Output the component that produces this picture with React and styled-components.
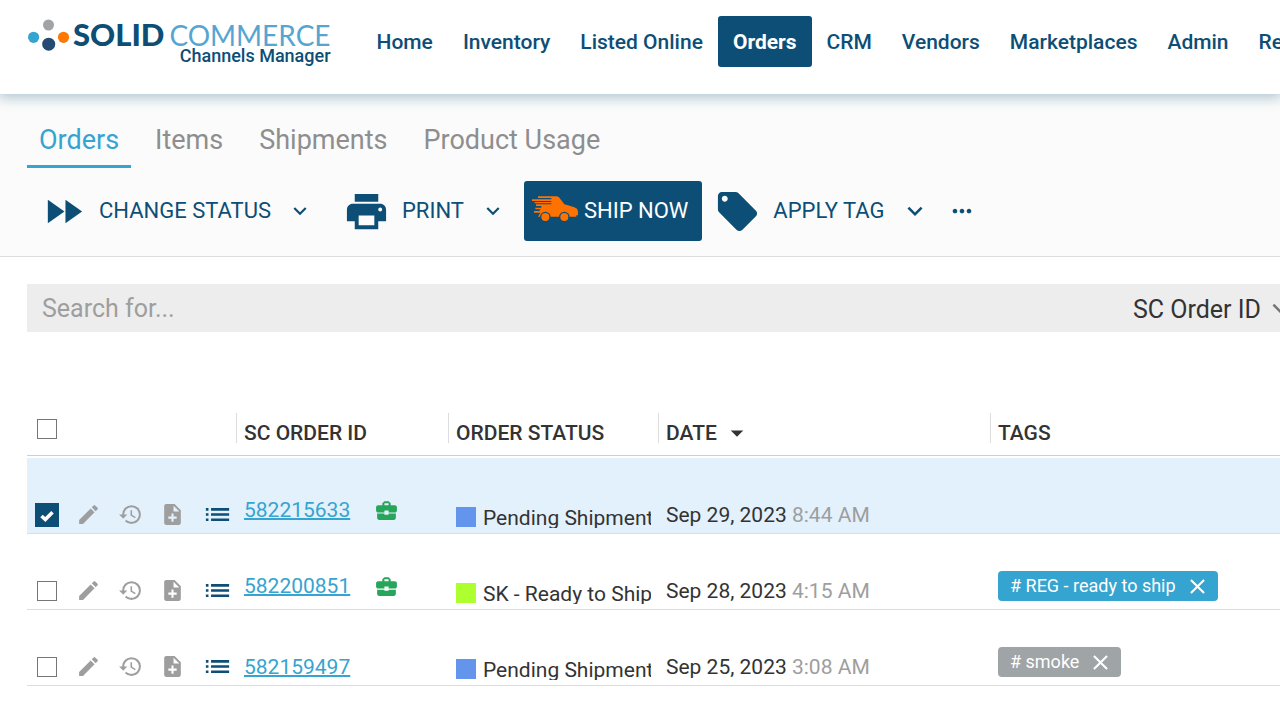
import { useState } from "react";
import styled, { createGlobalStyle } from "styled-components";
import {
    MdArrowDropDown,
    MdBusinessCenter,
    MdClose,
    MdEdit,
    MdExpandMore,
    MdFastForward,
    MdHistory,
    MdList,
    MdLocalOffer,
    MdMoreHoriz,
    MdNoteAdd,
    MdPrint,
} from "react-icons/md";

const navy = "#0d4e76";
const blue = "#35a4d1";
const grey = "#9e9e9e";
const dark = "#333333";

const GlobalStyle = createGlobalStyle`
    * {
        box-sizing: border-box;
    }

    body {
        margin: 0;
        background: #ffffff;
        color: ${dark};
        font-family: Roboto, "Liberation Sans", sans-serif;
        font-size: 21px;
        line-height: 24px;
        overflow-x: hidden;
    }

    button, input, select {
        margin: 0;
        font: inherit;
        color: inherit;
    }

    button {
        padding: 0;
        border: none;
        background: none;
        cursor: pointer;
    }

    svg {
        display: block;
        flex-shrink: 0;
    }
`;

const Page = styled.div`
    overflow: hidden;
`;

const Header = styled.header`
    position: relative;
    display: flex;
    align-items: flex-start;
    gap: 31px;
    height: 94px;
    padding: 16px 0 0 27px;
    background: #ffffff;
    box-shadow: 0 2px 12px 2px rgba(13, 78, 118, 0.3);
`;

const Logo = styled.a`
    display: flex;
    flex-shrink: 0;
    gap: 3px;
    color: ${navy};
    text-decoration: none;
`;

const LogoText = styled.div`
    display: flex;
    flex-direction: column;
    align-items: flex-end;
    padding-top: 3px;
`;

const LogoName = styled.div`
    display: flex;
    align-items: baseline;
    gap: 5px;
    font-family: Lato, sans-serif;
    font-size: 31px;
    font-weight: 900;
    line-height: 30px;
`;

const LogoLight = styled.span`
    color: #56a5d1;
    font-size: 28px;
    font-weight: 400;
`;

const LogoSub = styled.div`
    font-size: 18px;
    font-weight: 500;
    line-height: 12px;
`;

const Nav = styled.nav`
    display: flex;
`;

const NavLink = styled.a`
    padding: 2px 15px 0;
    border-radius: 3px;
    background: ${(props) => (props.$active ? navy : "transparent")};
    color: ${(props) => (props.$active ? "#ffffff" : navy)};
    font-weight: ${(props) => (props.$active ? 700 : 500)};
    line-height: 49px;
    text-decoration: none;
    white-space: nowrap;
`;

const SubHeader = styled.section`
    padding: 21px 27px 15px;
    border-bottom: 1px solid #dddddd;
    background: #fbfbfb;
`;

const Tabs = styled.nav`
    display: flex;
    gap: 12px;
`;

const Tab = styled.a`
    padding: 0 12px;
    border-bottom: 3px solid ${(props) => (props.$active ? blue : "transparent")};
    color: ${(props) => (props.$active ? blue : "#8e8e8e")};
    font-size: 27px;
    line-height: 50px;
    text-decoration: none;
`;

const Toolbar = styled.div`
    display: flex;
    align-items: center;
    gap: 18px;
    height: 60px;
    margin-top: 13px;
    padding-left: 13px;
    color: ${navy};
    font-size: 22px;
`;

const ToolGroup = styled.div`
    display: flex;
    align-items: center;
    gap: 16px;
    padding-right: ${(props) => (props.$wide ? "12px" : "0")};
`;

const ToolButton = styled.button`
    display: flex;
    align-items: center;
    gap: 12px;
    white-space: nowrap;
`;

const ShipGroup = styled.div`
    display: flex;
    gap: 12px;
`;

const ShipButton = styled(ToolButton)`
    gap: 6px;
    height: 60px;
    padding: 0 14px 0 8px;
    border-radius: 3px;
    background: ${navy};
    color: #ffffff;
`;

const Content = styled.main`
    padding: 27px 0 0 27px;
`;

// the bar runs on past the right edge of the window
const SearchBar = styled.div`
    display: flex;
    align-items: center;
    height: 48px;
    margin-right: -24px;
    padding: 0 9px 0 15px;
    background: #ededed;
    font-size: 25px;
`;

const SearchInput = styled.input`
    flex: 1;
    min-width: 0;
    padding: 0;
    border: none;
    outline: none;
    background: none;

    &::placeholder {
        color: ${grey};
        opacity: 1;
    }
`;

const SearchSelect = styled.select`
    appearance: none;
    padding: 4px 4px 0 0;
    border: none;
    outline: none;
    background: none;
`;

const Table = styled.table`
    width: 100%;
    margin-top: 81px;
    border-collapse: separate;
    border-spacing: 0;
    table-layout: fixed;

    tbody::before {
        content: "";
        display: block;
        height: 2px;
    }
`;

const HeadCell = styled.th`
    width: ${(props) => props.$width || "auto"};
    height: 43px;
    padding: 0;
    border-bottom: 1px solid #cfcfcf;
    font-weight: 500;
    text-align: left;
    vertical-align: top;
`;

const HeadLabel = styled.div`
    display: flex;
    align-items: center;
    gap: 5px;
    height: 30px;
    padding: 10px 0 0 7px;
    border-left: 1px solid #dddddd;
`;

const HeadCheck = styled.div`
    padding: 4px 0 0 8px;
`;

const Row = styled.tr`
    background: ${(props) => (props.$selected ? "#e3f1fd" : "#ffffff")};
`;

const Cell = styled.td`
    height: 76px;
    padding: 0 0 ${(props) => props.$bottom || "6px"} 8px;
    border-bottom: 1px solid #dddddd;
    vertical-align: bottom;
`;

const Actions = styled.div`
    display: flex;
    align-items: center;
    gap: 17px;
    height: 25px;
`;

const IconButton = styled.button`
    display: flex;
    align-items: center;
    height: 25px;
    color: ${(props) => (props.$dark ? navy : grey)};
`;

const CheckWrap = styled.label`
    position: relative;
    display: grid;
    place-items: center;
    width: 24px;
    height: 24px;

    svg {
        position: absolute;
        top: 7px;
        left: 5px;
        pointer-events: none;
    }
`;

const CheckInput = styled.input`
    appearance: none;
    width: 20px;
    height: 20px;
    border: 1px solid #767676;
    background: #ffffff;

    &:checked {
        width: 24px;
        height: 24px;
        border-color: ${navy};
        background: ${navy};
    }
`;

const OrderId = styled.div`
    display: flex;
    align-items: center;
    gap: 24px;
    height: ${(props) => (props.$business ? "34px" : "24px")};
    color: #27a55a;
`;

const OrderLink = styled.a`
    color: ${blue};
    text-decoration-thickness: 2px;
`;

const Status = styled.div`
    display: flex;
    gap: 7px;
    height: 21px;
    margin-right: 7px;
    line-height: 23px;
    overflow: hidden;
    white-space: nowrap;
`;

const StatusColor = styled.span`
    flex-shrink: 0;
    width: 20px;
    height: 20px;
    background: ${(props) => props.$color};
`;

const Time = styled.span`
    color: ${grey};
`;

const Tag = styled.span`
    display: inline-flex;
    align-items: center;
    gap: 9px;
    height: 30px;
    padding: 0 8px 0 12px;
    border-radius: 4px;
    background: ${(props) => props.$color};
    color: #ffffff;
    font-size: 18px;
    vertical-align: bottom;
`;

const navLinks = [
    "Home",
    "Inventory",
    "Listed Online",
    "Orders",
    "CRM",
    "Vendors",
    "Marketplaces",
    "Admin",
    "Reports",
];

const tabs = ["Orders", "Items", "Shipments", "Product Usage"];

const orders = [
    {
        id: "582215633",
        business: true,
        status: "Pending Shipment",
        color: "#6495ed",
        date: "Sep 29, 2023",
        time: "8:44 AM",
    },
    {
        id: "582200851",
        business: true,
        status: "SK - Ready to Ship",
        color: "#adff2f",
        date: "Sep 28, 2023",
        time: "4:15 AM",
        tag: "# REG - ready to ship",
        tagColor: blue,
    },
    {
        id: "582159497",
        business: false,
        status: "Pending Shipment",
        color: "#6495ed",
        date: "Sep 25, 2023",
        time: "3:08 AM",
        tag: "# smoke",
        tagColor: "#9fa4a6",
    },
];

function LogoMark() {
    return (
        <svg width="43" height="36" viewBox="0 0 43 36">
            <circle cx="21.5" cy="9" r="5.5" fill="#9fa4a6" />
            <circle cx="6.6" cy="21.3" r="5.6" fill={blue} />
            <circle cx="21.7" cy="28.2" r="6.5" fill="#234b73" />
            <circle cx="36.5" cy="21.3" r="5.6" fill="#ff7800" />
        </svg>
    );
}

function VanIcon() {
    return (
        <svg width="46" height="30" viewBox="0 0 138 90" fill="#ff7200">
            <path d="M18 1H74C80 1 84 8 88 13L97 25C106 28 124 31 133 37C137 40 138 45 138 49V58H133V62H18L25 50H6V45H22L26 40H10V35H28V30H12V25H58V22H8V18H58V15H0V10H58V6H18Z" />
            <g stroke={navy} strokeWidth="4">
                <circle cx="40" cy="63" r="14" />
                <circle cx="97" cy="63" r="14" />
            </g>
        </svg>
    );
}

function Checkbox({ label, checked, onChange }) {
    return (
        <CheckWrap>
            <CheckInput
                type="checkbox"
                aria-label={label}
                checked={checked}
                onChange={onChange}
            />
            {checked && (
                <svg width="14" height="12" viewBox="0 0 14 12">
                    <path
                        d="M1.5 6L5.3 9.5L12.5 2.2"
                        fill="none"
                        stroke="#ffffff"
                        strokeWidth="3.6"
                    />
                </svg>
            )}
        </CheckWrap>
    );
}

export default function App() {
    const [selected, setSelected] = useState(["582215633"]);
    const [search, setSearch] = useState("");

    const allSelected = selected.length === orders.length;

    const toggle = (id) => {
        setSelected(
            selected.includes(id)
                ? selected.filter((item) => item !== id)
                : [...selected, id]
        );
    };

    const toggleAll = () => {
        setSelected(allSelected ? [] : orders.map((order) => order.id));
    };

    return (
        <Page>
            <GlobalStyle />
            <Header>
                <Logo href="#">
                    <LogoMark />
                    <LogoText>
                        <LogoName>
                            SOLID<LogoLight>COMMERCE</LogoLight>
                        </LogoName>
                        <LogoSub>Channels Manager</LogoSub>
                    </LogoText>
                </Logo>
                <Nav>
                    {navLinks.map((link) => (
                        <NavLink key={link} href="#" $active={link === "Orders"}>
                            {link}
                        </NavLink>
                    ))}
                </Nav>
            </Header>

            <SubHeader>
                <Tabs>
                    {tabs.map((tab) => (
                        <Tab key={tab} href="#" $active={tab === "Orders"}>
                            {tab}
                        </Tab>
                    ))}
                </Tabs>
                <Toolbar>
                    <ToolGroup $wide>
                        <ToolButton>
                            <MdFastForward size={47} />
                            CHANGE STATUS
                        </ToolButton>
                        <ToolButton aria-label="Change status options">
                            <MdExpandMore size={26} />
                        </ToolButton>
                    </ToolGroup>
                    <ToolGroup>
                        <ToolButton>
                            <MdPrint size={47} />
                            PRINT
                        </ToolButton>
                        <ToolButton aria-label="Print options">
                            <MdExpandMore size={26} />
                        </ToolButton>
                    </ToolGroup>
                    <ShipGroup>
                        <ShipButton>
                            <VanIcon />
                            SHIP NOW
                        </ShipButton>
                        <ToolGroup>
                            <ToolButton>
                                <MdLocalOffer size={47} />
                                APPLY TAG
                            </ToolButton>
                            <ToolButton aria-label="Tag options">
                                <MdExpandMore size={30} />
                            </ToolButton>
                        </ToolGroup>
                    </ShipGroup>
                    <ToolButton aria-label="More">
                        <MdMoreHoriz size={28} />
                    </ToolButton>
                </Toolbar>
            </SubHeader>

            <Content>
                <SearchBar>
                    <SearchInput
                        type="text"
                        aria-label="Search"
                        placeholder="Search for..."
                        value={search}
                        onChange={(e) => setSearch(e.target.value)}
                    />
                    <SearchSelect aria-label="Search by">
                        <option>SC Order ID</option>
                    </SearchSelect>
                    <MdExpandMore size={30} color="#757575" />
                </SearchBar>

                <Table>
                    <thead>
                        <tr>
                            <HeadCell $width="209px">
                                <HeadCheck>
                                    <Checkbox
                                        label="Select all orders"
                                        checked={allSelected}
                                        onChange={toggleAll}
                                    />
                                </HeadCheck>
                            </HeadCell>
                            <HeadCell $width="212px">
                                <HeadLabel>SC ORDER ID</HeadLabel>
                            </HeadCell>
                            <HeadCell $width="210px">
                                <HeadLabel>ORDER STATUS</HeadLabel>
                            </HeadCell>
                            <HeadCell $width="332px">
                                <HeadLabel>
                                    DATE
                                    <MdArrowDropDown size={30} />
                                </HeadLabel>
                            </HeadCell>
                            <HeadCell>
                                <HeadLabel>TAGS</HeadLabel>
                            </HeadCell>
                        </tr>
                    </thead>
                    <tbody>
                        {orders.map((order) => (
                            <Row
                                key={order.id}
                                $selected={selected.includes(order.id)}
                            >
                                <Cell>
                                    <Actions>
                                        <Checkbox
                                            label={"Select order " + order.id}
                                            checked={selected.includes(order.id)}
                                            onChange={() => toggle(order.id)}
                                        />
                                        <IconButton aria-label="Edit">
                                            <MdEdit size={25} />
                                        </IconButton>
                                        <IconButton aria-label="History">
                                            <MdHistory size={25} />
                                        </IconButton>
                                        <IconButton aria-label="Add note">
                                            <MdNoteAdd size={25} />
                                        </IconButton>
                                        <IconButton aria-label="Details" $dark>
                                            <MdList size={31} />
                                        </IconButton>
                                    </Actions>
                                </Cell>
                                <Cell>
                                    <OrderId $business={order.business}>
                                        <OrderLink href="#">{order.id}</OrderLink>
                                        {order.business && (
                                            <MdBusinessCenter size={25} />
                                        )}
                                    </OrderId>
                                </Cell>
                                <Cell $bottom="5px">
                                    <Status>
                                        <StatusColor $color={order.color} />
                                        {order.status}
                                    </Status>
                                </Cell>
                                <Cell>
                                    {order.date} <Time>{order.time}</Time>
                                </Cell>
                                <Cell $bottom="8px">
                                    {order.tag && (
                                        <Tag $color={order.tagColor}>
                                            {order.tag}
                                            <IconButton aria-label="Remove tag">
                                                <MdClose size={25} color="#ffffff" />
                                            </IconButton>
                                        </Tag>
                                    )}
                                </Cell>
                            </Row>
                        ))}
                    </tbody>
                </Table>
            </Content>
        </Page>
    );
}
